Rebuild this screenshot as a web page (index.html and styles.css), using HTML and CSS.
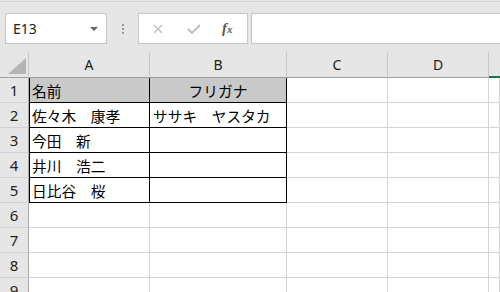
FILE: index.html
```html
<!DOCTYPE html>
<html lang="ja">
  <head>
    <meta charset="UTF-8" />
    <meta name="viewport" content="width=device-width, initial-scale=1.0" />
    <title>Book1 - Excel</title>
    <link rel="stylesheet" href="styles.css">
  </head>
  <body>
    <!-- Formula bar -->
    <div class="toolbar">
      <div class="name-box">
        <span>E13</span>
        <span class="caret"></span>
      </div>
      <div class="grip">
        <i></i><i></i><i></i>
      </div>
      <div class="fx-box">
        <svg class="icon" width="10" height="10" viewBox="0 0 10 10">
          <path d="M1 1 L9 9 M9 1 L1 9" stroke="#bdbdbd" stroke-width="1.3" fill="none" />
        </svg>
        <svg class="icon" width="14" height="10" viewBox="0 0 14 10">
          <path d="M1 5 L5 9 L13 1" stroke="#bdbdbd" stroke-width="1.8" fill="none" />
        </svg>
        <span class="fx">f<sub>x</sub></span>
      </div>
      <div class="formula-input"></div>
    </div>

    <!-- Sheet -->
    <div class="sheet">
      <div class="corner">
        <svg width="29" height="26" viewBox="0 0 29 26">
          <polygon points="8,22 26,22 26,6" fill="#b5b5b5" />
        </svg>
      </div>
      <div class="col-head">A</div>
      <div class="col-head">B</div>
      <div class="col-head">C</div>
      <div class="col-head">D</div>
      <div class="col-head active"></div>

      <div class="row-head">1</div>
      <div class="cell boxed first title">名前</div>
      <div class="cell boxed title center">フリガナ</div>
      <div class="cell"></div>
      <div class="cell"></div>
      <div class="cell"></div>

      <div class="row-head">2</div>
      <div class="cell boxed first">佐々木　康孝</div>
      <div class="cell boxed">ササキ　ヤスタカ</div>
      <div class="cell"></div>
      <div class="cell"></div>
      <div class="cell"></div>

      <div class="row-head">3</div>
      <div class="cell boxed first">今田　新</div>
      <div class="cell boxed"></div>
      <div class="cell"></div>
      <div class="cell"></div>
      <div class="cell"></div>

      <div class="row-head">4</div>
      <div class="cell boxed first">井川　浩二</div>
      <div class="cell boxed"></div>
      <div class="cell"></div>
      <div class="cell"></div>
      <div class="cell"></div>

      <div class="row-head">5</div>
      <div class="cell boxed first">日比谷　桜</div>
      <div class="cell boxed"></div>
      <div class="cell"></div>
      <div class="cell"></div>
      <div class="cell"></div>

      <div class="row-head">6</div>
      <div class="cell"></div>
      <div class="cell"></div>
      <div class="cell"></div>
      <div class="cell"></div>
      <div class="cell"></div>

      <div class="row-head">7</div>
      <div class="cell"></div>
      <div class="cell"></div>
      <div class="cell"></div>
      <div class="cell"></div>
      <div class="cell"></div>

      <div class="row-head">8</div>
      <div class="cell"></div>
      <div class="cell"></div>
      <div class="cell"></div>
      <div class="cell"></div>
      <div class="cell"></div>

      <div class="row-head">9</div>
      <div class="cell"></div>
      <div class="cell"></div>
      <div class="cell"></div>
      <div class="cell"></div>
      <div class="cell"></div>
    </div>
  </body>
</html>
```

FILE: styles.css
```css
body {
  margin: 0;
  background-color: #e6e6e6;
  font-family: "Noto Sans CJK JP", "Noto Sans", sans-serif;
  color: black;
  overflow: hidden;
  width: 500px;
  height: 292px;
}
.toolbar {
  height: 51px;
  border-top: 1px solid #d2d2d2;
  box-sizing: border-box;
  margin-top: 1px;
  display: flex;
  align-items: flex-start;
  padding-top: 11px;
  padding-left: 5px;
}
.name-box {
  width: 102px;
  height: 31px;
  box-sizing: border-box;
  background-color: white;
  border: 1px solid #c6c6c6;
  display: flex;
  align-items: center;
  justify-content: space-between;
  padding: 0 8px 0 7px;
  font-size: 14px;
  color: #222;
  font-family: "Noto Sans", sans-serif;
}
.caret {
  width: 0;
  height: 0;
  border-left: 4px solid transparent;
  border-right: 4px solid transparent;
  border-top: 4px solid #666;
}
.grip {
  width: 31px;
  height: 31px;
  display: flex;
  flex-direction: column;
  align-items: center;
  justify-content: center;
  gap: 2px;
}
.grip i {
  width: 2px;
  height: 2px;
  background-color: #9a9a9a;
}
.fx-box {
  width: 110px;
  height: 31px;
  box-sizing: border-box;
  background-color: white;
  border: 1px solid #c6c6c6;
  display: flex;
  align-items: center;
  padding-left: 14px;
  gap: 24px;
}
.fx {
  font-family: "Liberation Serif", serif;
  font-style: italic;
  font-weight: bold;
  font-size: 15px;
  color: #5a5a5a;
  margin-left: -3px;
}
.fx sub {
  font-size: 11px;
  vertical-align: 0;
}
.formula-input {
  flex: 1;
  height: 31px;
  box-sizing: border-box;
  margin-left: 3px;
  background-color: white;
  border: 1px solid #c6c6c6;
  border-right: none;
}
.sheet {
  display: grid;
  grid-template-columns: 29px 121px 137px 101px 101px 1fr;
  grid-template-rows: 26px;
  grid-auto-rows: 25px;
  background-color: white;
}
.corner {
  background-color: #e6e6e6;
  border-right: 1px solid #c8c8c8;
  border-bottom: 1px solid #9e9e9e;
  box-sizing: border-box;
}
.corner svg {
  display: block;
}
.col-head {
  background-color: #e6e6e6;
  border-right: 1px solid #c8c8c8;
  border-bottom: 1px solid #9e9e9e;
  box-sizing: border-box;
  display: flex;
  align-items: center;
  justify-content: center;
  font-size: 14px;
  color: #222;
  font-family: "Noto Sans", sans-serif;
}
.col-head.active {
  border-bottom: 2px solid #217346;
  border-right: none;
}
.row-head {
  background-color: #e6e6e6;
  border-right: 1px solid #ababab;
  border-bottom: 1px solid #d0d0d0;
  box-sizing: border-box;
  display: flex;
  align-items: center;
  justify-content: center;
  font-size: 15px;
  color: #222;
  font-family: "Noto Sans", sans-serif;
}
.cell {
  border-right: 1px solid #d4d4d4;
  border-bottom: 1px solid #d4d4d4;
  box-sizing: border-box;
  display: flex;
  align-items: center;
  padding-left: 3px;
  font-size: 14.7px;
  white-space: nowrap;
}
.cell.boxed {
  border-right-color: black;
  border-bottom-color: black;
}
.cell.first {
  border-left: 1px solid black;
  padding-left: 2px;
}
.cell.title {
  background-color: #c9c9c9;
}
.cell.center {
  justify-content: center;
  padding-left: 0;
}
```
